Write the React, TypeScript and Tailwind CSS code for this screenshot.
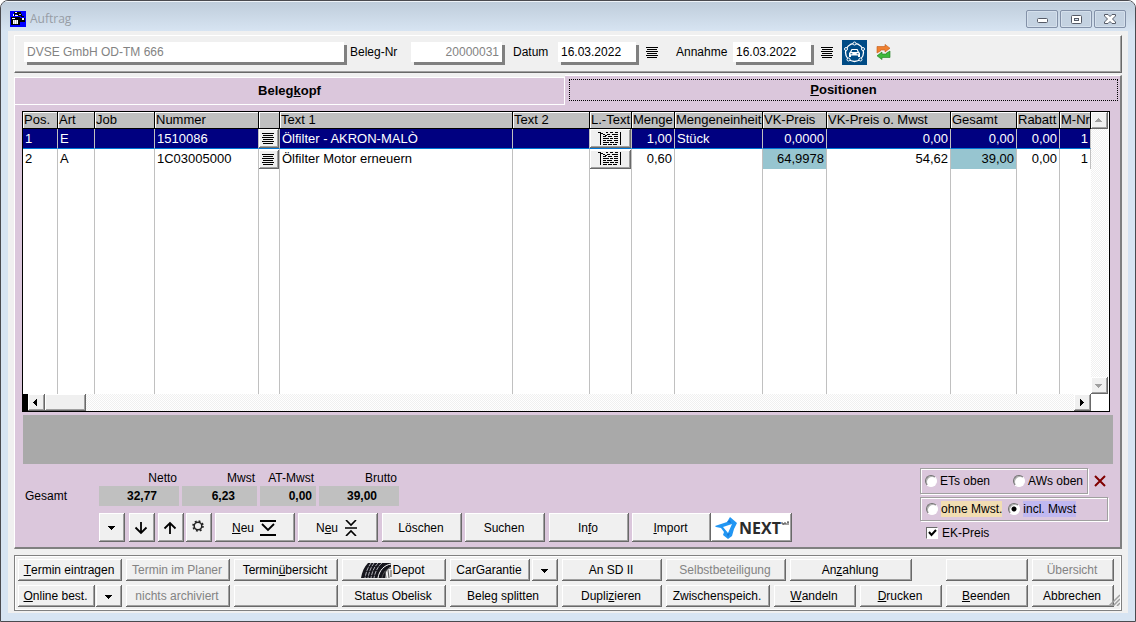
import React, { useState } from "react";
import clsx from "clsx";

const raised =
  "bg-[#f0f0f0] shadow-[inset_-1px_-1px_0_#696969,inset_1px_1px_0_#fff,inset_-2px_-2px_0_#a0a0a0]";

type BtnProps = {
  className?: string;
  disabled?: boolean;
  label?: string;
  children?: React.ReactNode;
};

const Btn = ({ className, disabled, label, children }: BtnProps) => (
  <button
    type="button"
    disabled={disabled}
    aria-label={label}
    className={clsx(
      "flex shrink-0 items-center justify-center pr-[2px] whitespace-nowrap",
      raised,
      disabled ? "text-[#838383]" : "text-black",
      className
    )}
  >
    {children}
  </button>
);

const ListIcon = () => (
  <svg width="12" height="11" viewBox="0 0 12 11" shapeRendering="crispEdges">
    <path d="M0 0h12v1H0zM1 2h10v1H1zM0 4h12v1H0zM1 6h10v1H1zM0 8h12v1H0zM1 10h10v1H1z" />
  </svg>
);

const LongTextIcon = () => (
  <svg width="24" height="14" viewBox="0 0 24 14" shapeRendering="crispEdges">
    <path d="M0 0h3v1H0zM2 1h1v12H2zM3 1h2v1H3zM5 2h2v1H5zM7 3h2v1H7zM22 0h1v13h-1zM8 0h2v1H8zM12 0h3v1h-3zM17 0h3v1h-3zM9 2h3v1H9zM14 2h6v1h-6zM5 4h3v1H5zM10 4h4v1h-4zM16 4h4v1h-4zM5 6h6v1H5zM12 6h3v1h-3zM16 6h4v1h-4zM5 8h3v1H5zM9 8h5v1H9zM16 8h4v1h-4zM5 10h6v1H5zM12 10h4v1h-4zM17 10h3v1h-3zM5 12h4v1H5zM10 12h4v1h-4zM15 12h4v1h-4z" />
  </svg>
);

const Triangle = ({ d, fill = "#000" }: { d: string; fill?: string }) => (
  <svg width="7" height="7" viewBox="0 0 7 7" fill={fill} shapeRendering="crispEdges">
    <path d={d} />
  </svg>
);

const DOWN = "M0 2h7v1H0zM1 3h5v1H1zM2 4h3v1H2zM3 5h1v1H3z";
const UP = "M3 1h1v1H3zM2 2h3v1H2zM1 3h5v1H1zM0 4h7v1H0z";
const LEFT = "M4 0h1v7H4zM3 1h1v5H3zM2 2h1v3H2zM1 3h1v1H1z";
const RIGHT = "M2 0h1v7H2zM3 1h1v5H3zM4 2h1v3H4zM5 3h1v1H5z";

const AppIcon = () => (
  <svg width="16" height="16" viewBox="0 0 16 16" shapeRendering="crispEdges">
    <path fill="#0000ff" d="M0 0h16v16H0z" />
    <path fill="#000" d="M4 1h7v2H4zM3 3h2v2H3zM7 3h5v2H7zM1 6h9v8H1zM10 7h5v4h-5zM11 5h3v1h-3z" />
    <path fill="#fff" d="M5 1h2v1H5zM3 3h1v2H3zM5 4h3v1H5zM3 9h1v4H3zM5 9h1v4H5zM7 9h1v4H7zM12 7h2v2h-2zM2 7h3v1H2z" />
    <path fill="#c0c0c0" d="M4 9h1v4H4zM6 9h1v4H6zM9 3h2v1H9z" />
  </svg>
);

const CarIcon = () => (
  <svg width="25" height="25" viewBox="0 0 25 25">
    <path fill="#004b85" d="M0 0h25v25H0z" />
    <circle cx="12.500" cy="12.500" r="9" fill="none" stroke="#fff" strokeWidth="1.300" />
    <g fill="#004b85" stroke="#fff" strokeWidth="1">
      <circle cx="12.500" cy="3.500" r="1.500" />
      <circle cx="4" cy="9" r="1.500" />
      <circle cx="21" cy="9" r="1.500" />
      <circle cx="6.500" cy="19.500" r="1.500" />
      <circle cx="18.500" cy="19.500" r="1.500" />
    </g>
    <path fill="#fff" d="M9.500 9h6l1.500 3 1 1v4h-2v-1.500H9V17H7v-4l1-1z" />
    <path fill="#004b85" d="M10.200 10h4.600l.8 2H9.400zM8.500 13.200h1.800v1H8.500zM14.700 13.200h1.800v1h-1.800z" />
  </svg>
);

const SwapIcon = () => (
  <svg width="15" height="16" viewBox="0 0 15 16">
    <path fill="#f08030" stroke="#c05a18" strokeWidth=".6" d="M1 9V2.500h8V.4L14 4.200 9 8V6H4.500v1z" />
    <path fill="#3cb83c" stroke="#1d7a1d" strokeWidth=".6" d="M14 7v6.500H6v2.100L1 11.800 6 8v2h4.500V9z" />
  </svg>
);

const TireIcon = () => (
  <svg width="31" height="17" viewBox="0 0 31 17">
    <path fill="#15151c" d="M7 1h23v4c-4 1-6 6-6 11H0C1 10 3 5 7 1z" />
    <path
      fill="none"
      stroke="#d8d8e0"
      strokeWidth=".8"
      strokeDasharray="4 1"
      d="M10 1C7 5 5 10 4 16M13 1C10 5 8 10 7 16M17 1c-4 4-6 9-7 15M21 1c-4 3-7 9-8 15"
    />
    <path fill="none" stroke="#fff" strokeWidth="1" d="M30 2c-7 1-12 7-13 14" />
    <path fill="none" stroke="#555" strokeWidth="1" d="M30 6c-5 1-8 5-9 10M24 9l1 7M27 8l1 8M30 8v7" />
  </svg>
);

const NextLogo = () => (
  <svg width="22" height="22" viewBox="0 0 22 22">
    <path
      fill="#2196f3"
      fillRule="evenodd"
      d="M0 9l12-4 3-5 7 6-3 6-2 7-4 3-5-4 1-3-3-4-5-1zM8 10l5 6 4-9z"
    />
    <path fill="#1976d2" d="M12 5l4 1-1-3zM12 17l1 3 2-4z" />
  </svg>
);

const cols = [
  { title: "Pos.", width: "w-[35px]" },
  { title: "Art", width: "w-[37px]" },
  { title: "Job", width: "w-[60px]" },
  { title: "Nummer", width: "w-[104px]" },
  { title: "", width: "w-[21px]" },
  { title: "Text 1", width: "" },
  { title: "Text 2", width: "w-[77px]" },
  { title: "L.-Text", width: "w-[42px]" },
  { title: "Menge", width: "w-[43px]" },
  { title: "Mengeneinheit", width: "w-[88px]" },
  { title: "VK-Preis", width: "w-[64px]" },
  { title: "VK-Preis o. Mwst", width: "w-[124px]" },
  { title: "Gesamt", width: "w-[66px]" },
  { title: "Rabatt", width: "w-[43px]" },
  { title: "M-Nr", width: "w-[31px]" },
];

const rows = [
  ["1", "E", "", "1510086", "", "Ölfilter - AKRON-MALÒ", "", "", "1,00", "Stück", "0,0000", "0,00", "0,00", "0,00", "1"],
  ["2", "A", "", "1C03005000", "", "Ölfilter Motor erneuern", "", "", "0,60", "", "64,9978", "54,62", "39,00", "0,00", "1"],
];

const rightAligned = [8, 10, 11, 12, 13, 14];

const PositionTable = () => (
  <table className="h-full w-full table-fixed border-separate border-spacing-0 text-[13px]">
    <colgroup>
      {cols.map((c, i) => (
        <col key={i} className={c.width} />
      ))}
    </colgroup>
    <thead>
      <tr className="h-[17px]">
        {cols.map((c, i) => (
          <th
            key={i}
            className="border-r border-b border-black bg-[#c0c0c0] p-0 pl-px text-left leading-4 font-normal whitespace-nowrap shadow-[inset_1px_1px_0_#fff]"
          >
            {c.title}
          </th>
        ))}
      </tr>
    </thead>
    <tbody>
      {rows.map((row, r) => (
        <tr key={r} className={clsx("h-5", r === 0 && "bg-[#000080] text-white")}>
          {row.map((cell, i) => (
            <td
              key={i}
              className={clsx(
                "h-5 overflow-hidden border-r border-r-[#c0c0c0] p-0 leading-4 whitespace-nowrap",
                r === 0 && "border-b border-b-[#0078d7]",
                rightAligned.includes(i) ? "pr-[2px] text-right" : i !== 4 && i !== 7 && "pl-[2px]",
                r === 1 && (i === 10 || i === 12) && "bg-[#97c5d0]"
              )}
            >
              {i === 4 || i === 7 ? (
                <Btn className="h-[19px] w-full" label={i === 4 ? "Liste" : "Langtext"}>
                  {i === 4 ? <ListIcon /> : <LongTextIcon />}
                </Btn>
              ) : (
                cell
              )}
            </td>
          ))}
        </tr>
      ))}
      <tr>
        {cols.map((c, i) => (
          <td key={i} className={clsx("p-0", i < 14 && "border-r border-[#c0c0c0]")} />
        ))}
      </tr>
    </tbody>
  </table>
);

const track =
  "bg-[repeating-conic-gradient(#fff_0_25%,#f0f0f0_0_50%)] bg-[length:2px_2px]";

const field =
  "h-5 shrink-0 bg-white px-[3px] shadow-[3px_3px_0_#808080] outline-none";

const radio =
  "size-3 shrink-0 appearance-none rounded-full border border-t-[#707070] border-r-white border-b-white border-l-[#707070] bg-white shadow-[inset_1px_1px_0_#b0b0b0] checked:bg-[radial-gradient(#000_0_2px,#fff_3px)]";

const captionBtn =
  "flex h-[18px] w-8 items-center justify-center rounded-xs border border-[#8391a8] bg-[#c4d2e1] shadow-[inset_0_0_0_1px_#d5e0ec]";

const Header = () => (
  <header className="flex h-[38px] shrink-0 items-start border border-t-white border-r-[#696969] border-b-[#696969] border-l-white pt-[6px] pl-[9px] leading-5 shadow-[inset_-1px_-1px_0_#a0a0a0]">
    <input
      aria-label="Kunde"
      className={clsx(field, "w-80 text-[#838383]")}
      defaultValue="DVSE GmbH OD-TM 666"
    />
    <label htmlFor="beleg" className="ml-[6px] w-[61px]">
      Beleg-Nr
    </label>
    <input
      id="beleg"
      className={clsx(field, "w-[91px] text-right text-[#838383]")}
      defaultValue="20000031"
    />
    <label htmlFor="datum" className="ml-[11px] w-[45px]">
      Datum
    </label>
    <input id="datum" className={clsx(field, "w-[78px]")} defaultValue="16.03.2022" />
    <button type="button" aria-label="Datum wählen" className="ml-[10px] flex h-5 items-center">
      <ListIcon />
    </button>
    <label htmlFor="annahme" className="ml-[18px] w-[57px]">
      Annahme
    </label>
    <input id="annahme" className={clsx(field, "w-[78px]")} defaultValue="16.03.2022" />
    <button type="button" aria-label="Annahme wählen" className="ml-[10px] flex h-5 items-center">
      <ListIcon />
    </button>
    <button type="button" aria-label="Fahrzeug" className="-mt-[2px] ml-[9px]">
      <CarIcon />
    </button>
    <button type="button" aria-label="Wechseln" className="ml-[9px] flex h-5 items-center">
      <SwapIcon />
    </button>
  </header>
);

const sums = [
  { label: "Netto", value: "32,77", box: "w-20 pr-[22px]" },
  { label: "Mwst", value: "6,23", box: "w-[75px] pr-[22px]" },
  { label: "AT-Mwst", value: "0,00", box: "w-14 pr-1" },
  { label: "Brutto", value: "39,00", box: "w-20 pr-[22px]" },
];

const Totals = () => (
  <div className="flex gap-[3px]">
    <span className="w-[74px] self-end pl-[3px] leading-5">Gesamt</span>
    {sums.map((s) => (
      <div key={s.label} className="flex flex-col">
        <span className="pr-[2px] text-right leading-4">{s.label}</span>
        <span className={clsx("h-5 bg-[#c0c0c0] text-right leading-5 font-bold", s.box)}>
          {s.value}
        </span>
      </div>
    ))}
  </div>
);

const Toolbar = () => (
  <div className="mt-[7px] flex h-[29px] gap-[3px] pl-[77px] *:h-full">
    <Btn className="w-[26px]" label="Auswahl">
      <Triangle d={DOWN} />
    </Btn>
    <Btn className="ml-px w-[26px]" label="Nach unten">
      <svg width="14" height="14" viewBox="0 0 14 14" fill="none" stroke="#000" strokeWidth="1.800">
        <path d="M7 1v11M1.500 6.500L7 12l5.500-5.500" />
      </svg>
    </Btn>
    <div className="flex gap-[2px] *:h-full">
      <Btn className="w-[26px]" label="Nach oben">
        <svg width="14" height="14" viewBox="0 0 14 14" fill="none" stroke="#000" strokeWidth="1.800">
          <path d="M7 13V2M1.500 7.500L7 2l5.500 5.500" />
        </svg>
      </Btn>
      <Btn className="w-[26px] pb-1" label="Einstellungen">
        <svg width="12" height="12" viewBox="0 0 12 12" fill="none" stroke="#222">
          <circle cx="6" cy="6" r="3.800" strokeWidth="1.500" />
          <circle cx="6" cy="6" r="5" strokeWidth="1.600" strokeDasharray="1.900 2.030" />
        </svg>
      </Btn>
    </div>
    <Btn className="w-20 gap-[6px]">
      <span>
        <u>N</u>eu
      </span>
      <svg width="16" height="16" viewBox="0 0 16 16" fill="none" stroke="#000" strokeWidth="1.800">
        <path d="M0 1h16M0 15h16M2 4l6 6 6-6" />
      </svg>
    </Btn>
    <Btn className="w-20 gap-[6px]">
      <span>
        N<u>e</u>u
      </span>
      <svg width="14" height="16" viewBox="0 0 14 16" fill="none" stroke="#000" strokeWidth="1.600">
        <path d="M1 8h12M2 0l5 5 5-5M2 16l5-5 5 5" />
      </svg>
    </Btn>
    <Btn className="ml-px w-20">Löschen</Btn>
    <Btn className="w-20">Suchen</Btn>
    <Btn className="ml-px w-20">
      In<u>f</u>o
    </Btn>
    <div className="flex">
      <Btn className="w-[79px]">
        <u>I</u>mport
      </Btn>
      <button
        type="button"
        className="flex w-[81px] items-center bg-white pl-1 shadow-[inset_-1px_-1px_0_#696969,inset_1px_1px_0_#fff,inset_-2px_-2px_0_#a0a0a0]"
      >
        <NextLogo />
        <span className="ml-[2px] font-['Open_Sans',sans-serif] text-base leading-5 font-bold text-[#2b2b2b]">
          NEXT
        </span>
        <svg width="8" height="6" viewBox="0 0 8 6" className="mb-2" fill="none" stroke="#444">
          <path d="M0 2h2v2M3 4V2h2v2M6 1h2M7 1v3" />
        </svg>
      </button>
    </div>
  </div>
);

const Options = () => {
  const [order, setOrder] = useState("");
  const [tax, setTax] = useState("incl");
  const [ek, setEk] = useState(true);

  return (
    <div className="flex w-[193px] flex-col pt-1">
      <div className="flex items-center gap-[6px]">
        <div className="flex h-[26px] w-[168px] items-center justify-between border border-[#a0a0a0] pr-1 pl-1 shadow-[1px_1px_0_#fff,inset_1px_1px_0_#fff]">
          <label className="flex items-center gap-[3px]">
            <input type="radio" name="order" className={radio} checked={order === "et"} onChange={() => setOrder("et")} />
            ETs oben
          </label>
          <label className="flex items-center gap-[3px]">
            <input type="radio" name="order" className={radio} checked={order === "aw"} onChange={() => setOrder("aw")} />
            AWs oben
          </label>
        </div>
        <button type="button" aria-label="Zurücksetzen" onClick={() => setOrder("")}>
          <svg width="12" height="12" viewBox="0 0 12 12" stroke="#800000" strokeWidth="2">
            <path d="M1 1l10 10M11 1L1 11" />
          </svg>
        </button>
      </div>
      <div className="mt-[3px] flex h-6 w-[188px] items-center gap-[6px] border border-[#a0a0a0] pl-[5px] shadow-[1px_1px_0_#fff,inset_1px_1px_0_#fff]">
        <label className="flex items-center gap-[3px]">
          <input type="radio" name="tax" className={radio} checked={tax === "ohne"} onChange={() => setTax("ohne")} />
          <span className="bg-[#f1ddb3] leading-4">ohne Mwst.</span>
        </label>
        <label className="flex items-center gap-[3px]">
          <input type="radio" name="tax" className={radio} checked={tax === "incl"} onChange={() => setTax("incl")} />
          <span className="bg-[#c0b8f0] leading-4">incl. Mwst</span>
        </label>
      </div>
      <label className="relative mt-1 flex items-center gap-1 pl-[6px] leading-4">
        <input
          type="checkbox"
          checked={ek}
          onChange={() => setEk(!ek)}
          className="peer size-3 appearance-none border border-t-[#696969] border-r-white border-b-white border-l-[#696969] bg-white"
        />
        <svg
          className="pointer-events-none absolute left-2 hidden peer-checked:block"
          width="9"
          height="8"
          viewBox="0 0 9 8"
          fill="none"
          stroke="#000"
          strokeWidth="2"
        >
          <path d="M1 3l2.500 3L8 1" />
        </svg>
        EK-Preis
      </label>
    </div>
  );
};

const Footer = () => (
  <footer className="relative flex h-14 shrink-0 flex-col gap-1 border border-[#808080] pt-[3px] pl-[3px] shadow-[inset_1px_1px_0_#fff,inset_-1px_-1px_0_#fff]">
    <div className="flex h-[22px] gap-1 *:h-full">
      <Btn className="w-[104px]">
        <u>T</u>ermin eintragen
      </Btn>
      <Btn className="w-[104px]" disabled>
        Termin im Planer
      </Btn>
      <Btn className="w-[104px]">
        Termin<u>ü</u>bersicht
      </Btn>
      <Btn className="w-[104px]">
        <TireIcon />
        Depot
      </Btn>
      <div className="flex gap-[2px] *:h-full">
        <Btn className="w-20">CarGarantie</Btn>
        <Btn className="w-[26px]" label="CarGarantie Auswahl">
          <Triangle d={DOWN} />
        </Btn>
      </div>
      <Btn className="w-[100px]">An SD II</Btn>
      <Btn className="w-[120px]" disabled>
        Selbstbeteiligung
      </Btn>
      <Btn className="w-[122px]">
        An<u>z</u>ahlung
      </Btn>
      <Btn className="ml-[30px] w-[82px]" label="Frei" />
      <Btn className="w-[82px]" disabled>
        Übersicht
      </Btn>
    </div>
    <div className="flex h-[22px] gap-1 *:h-full">
      <div className="flex gap-px *:h-full">
        <Btn className="w-[77px]">
          <u>O</u>nline best.
        </Btn>
        <Btn className="w-[26px]" label="Online Auswahl">
          <Triangle d={DOWN} />
        </Btn>
      </div>
      <Btn className="w-[104px]" disabled>
        nichts archiviert
      </Btn>
      <Btn className="w-[104px]" label="Frei" />
      <Btn className="w-[104px]">Status Obelisk</Btn>
      <Btn className="w-[108px]">Beleg splitten</Btn>
      <Btn className="w-[100px]">
        Dupli<u>z</u>ieren
      </Btn>
      <Btn className="w-[104px]">Zwischenspeich.</Btn>
      <Btn className="w-[82px]">
        <u>W</u>andeln
      </Btn>
      <Btn className="w-[82px]">
        <u>D</u>rucken
      </Btn>
      <Btn className="w-[82px]">
        <u>B</u>eenden
      </Btn>
      <Btn className="w-[82px]">Abbrechen</Btn>
    </div>
    <svg className="absolute right-px bottom-1" width="12" height="12" viewBox="0 0 12 12" stroke="#a0a0a0" strokeWidth="1.500">
      <path d="M1 12L12 1M5 12l7-7M9 12l3-3" />
    </svg>
  </footer>
);

export default function App() {
  return (
    <div className="flex h-screen min-h-[480px] flex-col overflow-hidden rounded-t-lg border border-[#4a4a4f] bg-[#d7e4f2] font-['Liberation_Sans',Arial,sans-serif] text-xs text-black">
      <div className="flex h-[30px] shrink-0 items-center gap-1 border-t border-[#eef3f8] bg-linear-to-b from-[#bfcddb] to-[#d7e4f2] pt-[5px] pr-[9px] pl-[9px]">
        <AppIcon />
        <h1 className="flex-1 font-['Open_Sans',sans-serif] text-xs text-[#979da5]">Auftrag</h1>
        <div className="flex gap-[2px]">
          <button type="button" aria-label="Minimieren" className={captionBtn}>
            <svg width="11" height="5" viewBox="0 0 11 5" className="mt-[3px]">
              <rect x=".5" y=".5" width="10" height="4" rx="1" fill="#fff" stroke="#555a66" />
            </svg>
          </button>
          <button type="button" aria-label="Maximieren" className={captionBtn}>
            <svg width="11" height="9" viewBox="0 0 11 9">
              <rect x=".5" y=".5" width="10" height="8" rx="1" fill="#fff" stroke="#555a66" />
              <rect x="3.500" y="3.500" width="4" height="2" fill="#d7e4f2" stroke="#555a66" />
            </svg>
          </button>
          <button type="button" aria-label="Schließen" className={captionBtn}>
            <svg width="12" height="10" viewBox="0 0 12 10">
              <path
                d="M.5.500h3.500l2 2 2-2h3.500v1.500L8.500 5l3 3v1.500H8l-2-2-2 2H.5V8l3-3-3-3z"
                fill="#fff"
                stroke="#555a66"
              />
            </svg>
          </button>
        </div>
      </div>

      <div className="mx-[7px] mb-2 flex min-h-0 flex-1 flex-col bg-[#f0f0f0] px-[6px] pt-1 pb-[2px]">
        <Header />

        <main className="mt-[2px] mb-[6px] flex min-h-0 flex-1 flex-col">
          <div role="tablist" className="flex h-[30px] shrink-0 text-[13px] font-bold">
            <button
              type="button"
              role="tab"
              aria-selected={false}
              className="mt-[2px] flex-1 border border-white bg-[#dbc7dc] leading-6"
            >
              Beleg<u>k</u>opf
            </button>
            <button
              type="button"
              role="tab"
              aria-selected={true}
              className="flex-1 border-t border-r-2 border-t-white border-r-[#808080] bg-[#dbc7dc] pt-[3px] pr-[2px] pb-1 pl-1"
            >
              <span className="block h-full border border-dotted border-black leading-5">
                <u>P</u>ositionen
              </span>
            </button>
          </div>

          <div className="flex min-h-0 flex-1 flex-col border-r-2 border-b-2 border-l border-r-[#808080] border-b-[#808080] border-l-white bg-[#dbc7dc] px-[7px] pt-[6px]">
            <div className="mr-[3px] flex min-h-0 flex-1 flex-col border border-black bg-white">
              <div className="flex min-h-0 flex-1">
                <div className="min-w-0 flex-1">
                  <PositionTable />
                </div>
                <div className="flex w-[18px]">
                  <div className={clsx("flex w-[17px] flex-col justify-between", track)}>
                    <Btn className="h-[17px] w-[17px]" label="Hoch">
                      <Triangle d={UP} fill="#a0a0a0" />
                    </Btn>
                    <Btn className="h-[17px] w-[17px]" label="Runter">
                      <Triangle d={DOWN} fill="#a0a0a0" />
                    </Btn>
                  </div>
                </div>
              </div>
              <div className="flex h-[17px] shrink-0">
                <div className="w-[5px] bg-black" />
                <div className={clsx("flex flex-1", track)}>
                  <Btn className="w-[17px]" label="Links">
                    <Triangle d={LEFT} />
                  </Btn>
                  <div className={clsx("w-[41px]", raised)} />
                  <Btn className="ml-auto w-[17px]" label="Rechts">
                    <Triangle d={RIGHT} />
                  </Btn>
                </div>
                <div className="w-[18px] bg-white" />
              </div>
            </div>

            <div className="mt-[3px] ml-px h-[49px] shrink-0 bg-[#a9a9a9]" />

            <div className="flex shrink-0 justify-between">
              <div className="pt-[6px] pb-[5px]">
                <Totals />
                <Toolbar />
              </div>
              <Options />
            </div>
          </div>
        </main>

        <Footer />
      </div>
    </div>
  );
}
